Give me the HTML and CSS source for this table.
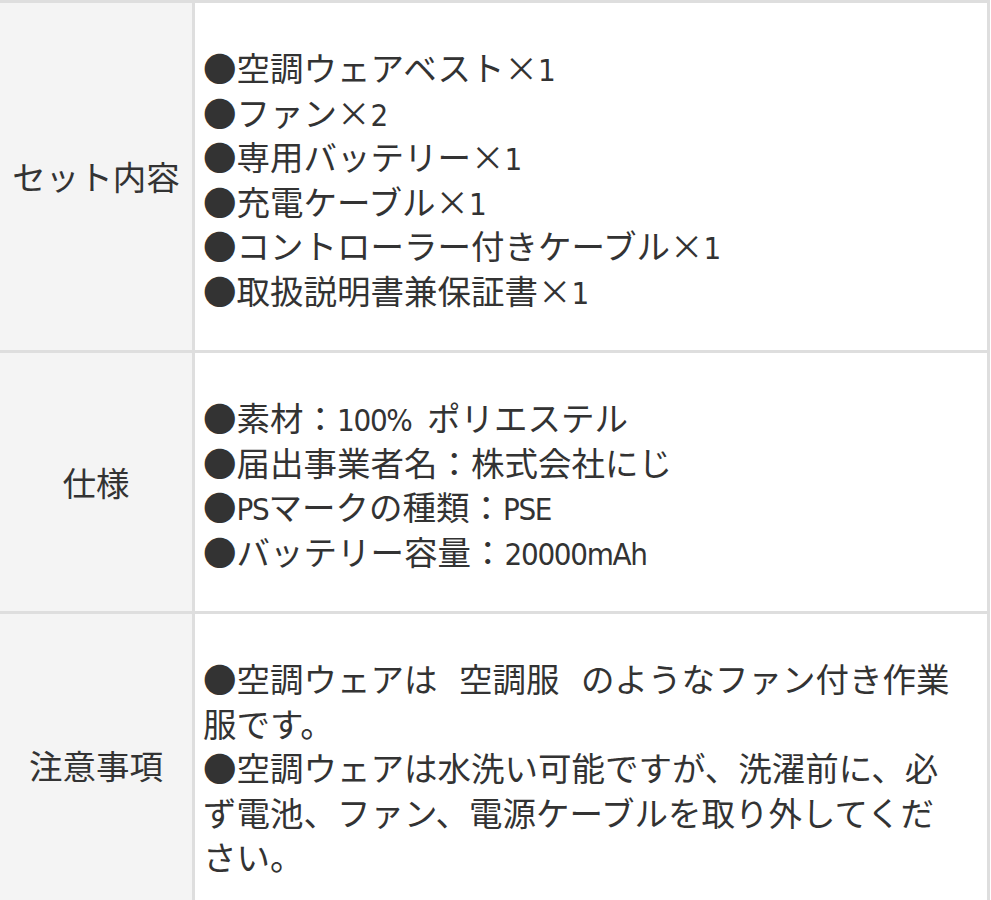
FILE: index.html
```html
<!DOCTYPE html>
<html lang="ja">
<head>
<meta charset="utf-8">
<title>仕様</title>
<link rel="stylesheet" href="styles.css">
</head>
<body>
<div class="spec">
  <div class="row">
    <div class="th">セット内容</div>
    <div class="td">●空調ウェアベスト<span class="x">×</span><span class="lat">1</span><br>●ファン<span class="x">×</span><span class="lat">2</span><br>●専用バッテリー<span class="x">×</span><span class="lat">1</span><br>●充電ケーブル<span class="x">×</span><span class="lat">1</span><br>●コントローラー付きケーブル<span class="x">×</span><span class="lat">1</span><br>●取扱説明書兼保証書<span class="x">×</span><span class="lat">1</span></div>
  </div>
  <div class="row">
    <div class="th">仕様</div>
    <div class="td">●素材：<span class="lat">100%</span><span class="gap"> </span>ポリエステル<br>●届出事業者名：株式会社にじ<br>●<span class="lat">PS</span>マークの種類：<span class="lat">PSE</span><br>●バッテリー容量：<span class="lat">20000mAh</span></div>
  </div>
  <div class="row">
    <div class="th">注意事項</div>
    <div class="td"><span class="wide">●空調ウェアは 空調服 のようなファン付き作業</span><br>服です。<br>●空調ウェアは水洗い可能ですが、洗濯前に、必<br>ず電池、ファン、電源ケーブルを取り外してくだ<br>さい。</div>
  </div>
</div>
</body>
</html>
```
FILE: styles.css
```css
html, body {
  margin: 0;
  padding: 0;
  background: #ffffff;
}

body {
  font-family: "Noto Sans CJK JP", "Noto Sans", sans-serif;
  color: #333333;
}

.spec {
  width: 990px;
  border-top: 3px solid #dedede;
}

.row {
  display: grid;
  grid-template-columns: 195px 795px;
  border-bottom: 3px solid #dedede;
}

.th {
  background: #f4f4f4;
  border-right: 3px solid #dedede;
  display: flex;
  align-items: center;
  justify-content: center;
  font-size: 33.5px;
  line-height: 44.5px;
  white-space: nowrap;
}

.td {
  border-right: 3px solid #dedede;
  padding: 42px 8px 38px 8px;
  font-size: 33.5px;
  line-height: 44.5px;
  white-space: nowrap;
}

.lat {
  font-family: "DejaVu Sans Condensed", "Noto Sans", sans-serif;
  font-size: 31px;
  letter-spacing: -1.3px;
  line-height: 1;
}

.x {
  font-feature-settings: "fwid";
  line-height: 1;
}

.gap {
  word-spacing: 8px;
}

.wide {
  word-spacing: 14px;
}
```
